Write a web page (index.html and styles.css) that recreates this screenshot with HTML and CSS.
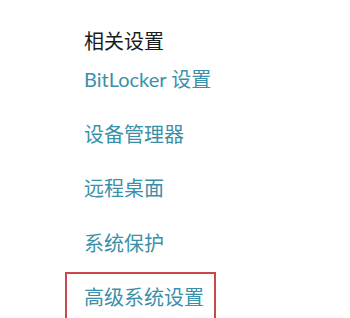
FILE: index.html
```html
<!DOCTYPE html>
<html lang="zh-CN">
<head>
<meta charset="utf-8">
<link rel="stylesheet" href="styles.css">
</head>
<body>
<div class="panel">
  <div class="title">相关设置</div>
  <ul class="links">
    <li><a class="link">BitLocker 设置</a></li>
    <li><a class="link">设备管理器</a></li>
    <li><a class="link">远程桌面</a></li>
    <li><a class="link">系统保护</a></li>
    <li class="highlight"><a class="link">高级系统设置</a></li>
  </ul>
</div>
</body>
</html>
```
FILE: styles.css
```css
html, body {
  margin: 0;
  padding: 0;
  background: #ffffff;
}
body {
  width: 350px;
  height: 318px;
  overflow: hidden;
  font-family: "Lato", "Noto Sans CJK SC", sans-serif;
  font-size: 20px;
  line-height: 28px;
}
.panel {
  padding: 27px 0 0 84px;
}
.title {
  color: #1c1c1c;
  height: 28px;
}
.links {
  list-style: none;
  margin: 10px 0 0 0;
  padding: 0;
  display: flex;
  flex-direction: column;
  gap: 26.5px;
}
.links li {
  height: 28px;
}
.link {
  color: #3b90a9;
  text-decoration: none;
  white-space: nowrap;
}
.links li.highlight {
  align-self: flex-start;
  margin: -11px 0 0 -19px;
  padding: 9px 10px 0 17px;
  border: 2px solid #c8484b;
  border-bottom: none;
  height: 40px;
}
```
